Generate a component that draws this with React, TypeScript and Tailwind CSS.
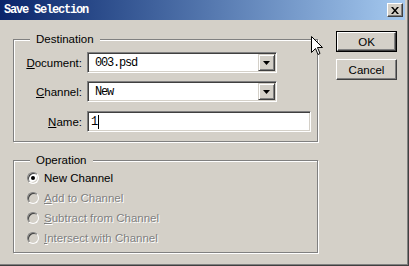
import React from 'react';

const ui = "font-['Liberation_Sans',Arial,sans-serif] text-[11.5px] leading-[14px]";
const mono = "font-['Liberation_Mono','Courier_New',monospace] text-[12px] tracking-[-1.2px]";

function Caret() {
  return (
    <svg width="7" height="4" viewBox="0 0 7 4">
      <path d="M0 0h7L3.5 4z" fill="#000" />
    </svg>
  );
}

function Combo({ value }: { value: string }) {
  return (
    <div className="flex h-[21px] w-[190px] border border-t-[#808080] border-l-[#808080] border-r-white border-b-white bg-white shadow-[inset_1px_1px_0_#404040,inset_-1px_-1px_0_#d4d0c8] p-[1px]">
      <span className={`flex-1 pl-[6px] pt-[2px] text-black ${mono}`}>{value}</span>
      <div className="flex w-[17px] items-center justify-center bg-[#d4d0c8] border border-t-[#d4d0c8] border-l-[#d4d0c8] border-r-[#404040] border-b-[#404040] shadow-[inset_1px_1px_0_#fff,inset_-1px_-1px_0_#808080]">
        <Caret />
      </div>
    </div>
  );
}

function Radio({ label, hot, rest, checked, disabled }: { label?: string; hot?: string; rest?: string; checked?: boolean; disabled?: boolean }) {
  return (
    <div className="flex h-[20px] items-center pl-[13px]">
      <div
        className={`flex h-[12px] w-[12px] items-center justify-center rounded-full border border-t-[#808080] border-l-[#808080] border-r-white border-b-white shadow-[inset_1px_1px_0_#404040,inset_-1px_-1px_0_#d4d0c8] ${
          disabled ? 'bg-[#d4d0c8]' : 'bg-white'
        }`}
      >
        {checked && <div className="h-[4px] w-[4px] rounded-full bg-black" />}
      </div>
      <span
        className={`ml-[5px] ${
          disabled ? 'text-[#808080] [text-shadow:1px_1px_0_#fff]' : 'text-black'
        }`}
      >
        {label}
        {hot && <u>{hot}</u>}
        {rest}
      </span>
    </div>
  );
}

function Button({ children, isDefault }: { children: React.ReactNode; isDefault?: boolean }) {
  return (
    <div className={`h-[21px] w-[61px] ${isDefault ? 'border border-black' : ''}`}>
      <div className="flex h-full w-full items-center justify-center border border-t-white border-l-white border-r-[#404040] border-b-[#404040] shadow-[inset_-1px_-1px_0_#808080] text-black">
        {children}
      </div>
    </div>
  );
}

export default function App() {
  return (
    <div className={`relative h-[266px] w-[409px] bg-[#d4d0c8] shadow-[inset_-1px_-1px_0_#404040,inset_-2px_-2px_0_#808080] ${ui}`}>
      {/* title bar */}
      <div className="mr-[4px] flex h-[20px] items-center bg-gradient-to-r from-[#0a246a] to-[#a6caf0] pl-[4px] pr-[2px]">
        <span className={`flex-1 font-bold text-white ${mono}`}>Save Selection</span>
        <div className="flex h-[14px] w-[16px] items-center justify-center bg-[#d4d0c8] border border-t-white border-l-white border-r-[#404040] border-b-[#404040] shadow-[inset_-1px_-1px_0_#808080]">
          <svg width="8" height="7" viewBox="0 0 8 7">
            <path d="M0 0h2l2 2.5L6 0h2L5 3.5 8 7H6L4 4.5 2 7H0l3-3.5z" fill="#000" />
          </svg>
        </div>
      </div>

      <div className="flex items-start pl-[13px] pt-[11px]">
        <div className="mt-[1px] flex w-[305px] flex-col">
          <fieldset className="border border-[#808080] shadow-[inset_1px_1px_0_#fff,1px_1px_0_#fff] px-0 pt-[6px] pb-[9px]">
            <legend className="ml-[16px] bg-[#d4d0c8] px-[6px] text-black">Destination</legend>
            <div className="flex h-[21px] items-center">
              <span className="w-[68px] text-right text-black"><u>D</u>ocument:</span>
              <div className="ml-[5px]"><Combo value="003.psd" /></div>
            </div>
            <div className="mt-[8px] flex h-[21px] items-center">
              <span className="w-[68px] text-right text-black"><u>C</u>hannel:</span>
              <div className="ml-[5px]"><Combo value="New" /></div>
            </div>
            <div className="mt-[9px] flex h-[21px] items-center">
              <span className="w-[68px] text-right text-black"><u>N</u>ame:</span>
              <div className="ml-[5px] flex h-[21px] w-[224px] items-center border border-t-[#808080] border-l-[#808080] border-r-white border-b-white bg-white shadow-[inset_1px_1px_0_#404040,inset_-1px_-1px_0_#d4d0c8] pl-[3px]">
                <span className={`text-black ${mono}`}>1</span>
                <span className="ml-[1px] h-[14px] w-[1px] bg-black" />
              </div>
            </div>
          </fieldset>

          <fieldset className="mt-[11px] border border-[#808080] shadow-[inset_1px_1px_0_#fff,1px_1px_0_#fff] px-0 pt-[1px] pb-[4px]">
            <legend className="ml-[16px] bg-[#d4d0c8] px-[6px] text-black">Operation</legend>
            <Radio label="New Channel" checked />
            <Radio hot="A" rest="dd to Channel" disabled />
            <Radio hot="S" rest="ubtract from Channel" disabled />
            <Radio hot="I" rest="ntersect with Channel" disabled />
          </fieldset>
        </div>

        <div className="ml-[18px] flex flex-col gap-[7px]">
          <Button isDefault>OK</Button>
          <Button>Cancel</Button>
        </div>
      </div>

      {/* mouse pointer */}
      <svg className="absolute left-[311px] top-[36px]" width="12" height="19" viewBox="0 0 12 19">
        <path d="M0.5 0.5V16.5L4.5 12.5L7 18.5L9 17.5L6.5 11.5H11.5Z" fill="#fff" stroke="#000" strokeWidth="1" />
      </svg>
    </div>
  );
}
